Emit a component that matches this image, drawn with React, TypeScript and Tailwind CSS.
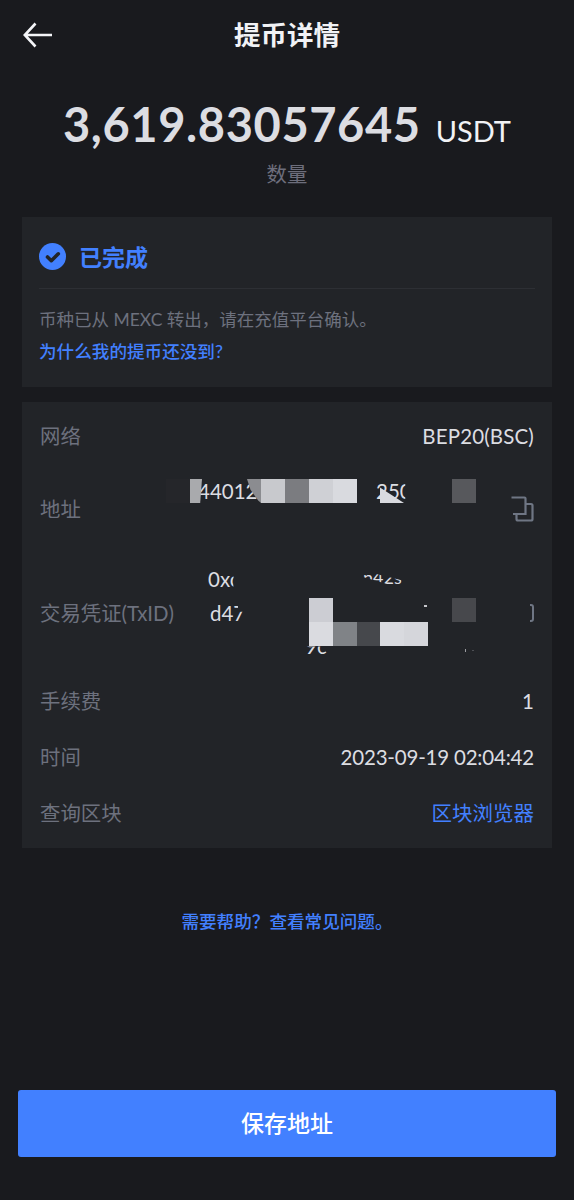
import type { ReactNode } from 'react';

// Mosaic tiles laid over the private parts of the address and the TxID
const addressTiles = [
  'left-[-24px] w-6 bg-[#25262a]',
  'left-0 w-3 bg-[#a9aaad] [clip-path:polygon(0_0,100%_0,85%_100%,0_100%)]',
  'left-[57px] w-[14px] bg-[#8b8c90] [clip-path:polygon(0_0,100%_0,100%_100%,80%_90%,25%_45%)]',
  'left-[71px] w-6 bg-[#c8c9cd]',
  'left-[95px] w-6 bg-[#7b7c80]',
  'left-[119px] w-6 bg-[#cfd0d5]',
  'left-[143px] w-6 bg-[#d9dadf]',
  'left-[262px] w-6 bg-[#57585c]',
];

const txTiles = [
  'left-[119px] top-0 bg-[#cccdd3]',
  'left-[262px] top-0 bg-[#47484c]',
  'left-[119px] top-6 bg-[#dadbe0]',
  'left-[143px] top-6 bg-[#808387]',
  'left-[167px] top-6 bg-[#46484c]',
  'left-[190px] top-6 bg-[#d9dadf]',
  'left-[214px] top-6 bg-[#d5d6db]',
];

interface RowProps {
  label: string;
  className: string;
  children: ReactNode;
}

function Row({ label, className, children }: RowProps) {
  return (
    <div className={`flex items-center justify-between ${className}`}>
      <span className="text-[20.400px] text-[#6d717e]">{label}</span>
      {children}
    </div>
  );
}

function BackIcon() {
  return (
    <svg width="30" height="26" viewBox="0 0 30 26" fill="none" stroke="#f4f5f8" strokeWidth="2.6">
      <path d="M13.500 1.500 2.800 13l10.700 11.500M3 13h27" />
    </svg>
  );
}

function DoneIcon() {
  return (
    <svg width="27" height="27" viewBox="0 0 27 27" fill="none">
      <circle cx="13.5" cy="13.5" r="13.5" fill="#4280ff" />
      <path d="m8.500 14 3.800 3.700 7-6.900" stroke="#222428" strokeWidth="3.6" strokeLinecap="round" strokeLinejoin="round" />
    </svg>
  );
}

function CopyIcon() {
  return (
    <svg width="23" height="26" viewBox="0 0 23 26" fill="none" stroke="#6f7684" strokeWidth="2.2">
      <path d="M.500 1.500h13q1 0 1 1v15.500H2M5.500 18v5q0 1.500 1.500 1.500h13q1.500 0 1.500-1.500V9.500q0-1.500-1.500-1.500h-5.500" />
    </svg>
  );
}

export default function App() {
  return (
    <div className="flex h-[1200px] w-[574px] flex-col overflow-hidden bg-[#191a1e] font-['Lato','Noto_Sans_CJK_SC',sans-serif] text-[#dcdde2]">
      <header className="grid h-[70px] grid-cols-[1fr_auto_1fr] items-center px-[22px]">
        <button aria-label="返回" className="w-fit">
          <BackIcon />
        </button>
        <h1 className="pt-[2px] text-[26.500px] font-bold text-[#f1f2f5]">提币详情</h1>
      </header>

      <section className="h-[147px] text-center">
        <div className="mt-[22px] flex h-[64px] items-baseline justify-center whitespace-nowrap">
          <span className="text-[47px] leading-[64px] font-bold tracking-[0.6px]">3,619.83057645</span>
          <span className="ml-[15px] text-[29px] text-[#f1f2f5]">USDT</span>
        </div>
        <p className="mt-[3px] text-[20.400px] leading-[30px] text-[#6d6e7c]">数量</p>
      </section>

      <section className="mx-[22px] h-[170px] bg-[#222428] px-[17px]">
        <div className="flex h-[72px] items-center gap-[13px] border-b border-[#2d2f34] pt-[8px] text-[#4280ff]">
          <DoneIcon />
          <span className="pt-px text-[23px] font-bold">已完成</span>
        </div>
        <p className="mt-[15px] text-[17.500px] leading-[32px] text-[#6d717e]">币种已从 MEXC 转出，请在充值平台确认。</p>
        <a className="block text-[17.600px] leading-[32px] font-medium text-[#4280ff]">为什么我的提币还没到?</a>
      </section>

      <section className="mx-[22px] mt-[15px] h-[446px] bg-[#222428] px-[18px] text-[20.500px]">
        <Row label="网络" className="h-[69px]">
          <span className="tracking-[0.15px]">BEP20(BSC)</span>
        </Row>

        <Row label="地址" className="h-[76px]">
          <div className="flex items-center">
            <div className="relative mr-[35px] h-6 w-[286px] -translate-y-[18px] leading-6">
              <span className="absolute left-[8px]">44012</span>
              <span className="absolute left-[186px] [clip-path:polygon(0_0,82%_0,82%_100%,0_100%)]">250</span>
              <span className="absolute left-[190px] h-6 w-6 bg-[#d9dadf] [clip-path:polygon(0_35%,100%_100%,0_100%)]" />
              {addressTiles.map((tile) => (
                <span key={tile} className={`absolute top-0 h-6 ${tile}`} />
              ))}
            </div>
            <CopyIcon />
          </div>
        </Row>

        <Row label="交易凭证(TxID)" className="h-[132px]">
          <div className="flex items-center">
            <div className="relative mr-[53px] h-12 w-[286px] translate-y-[9px]">
              <span className="absolute -top-[34px] left-[18px] [clip-path:polygon(0_0,82%_0,80%_100%,0_100%)]">0xc</span>
              <span className="absolute top-0 left-[20px] [clip-path:polygon(0_0,78%_0,80%_45%,100%_45%,90%_100%,0_100%)]">d47</span>
              <span className="absolute -top-[34px] left-[173px] text-[18px] [clip-path:polygon(0_25%,100%_60%,100%_90%,0_48%)]">n42s</span>
              <span className="absolute top-[33px] left-[115px] [clip-path:inset(50%_0_0_0)]">9c</span>
              {txTiles.map((tile) => (
                <span key={tile} className={`absolute h-6 w-6 ${tile}`} />
              ))}
              <span className="absolute top-[7px] left-[234px] h-[2px] w-[3px] bg-[#c5c6cb]" />
              <span className="absolute top-[51px] left-[275px] h-[3px] w-px bg-[#9a9ba0]" />
              <span className="absolute top-[52px] left-[282px] h-px w-[2px] bg-[#4d4f54]" />
            </div>
            <svg width="5" height="18" viewBox="0 0 5 18" fill="none" stroke="#6f7684" strokeWidth="2">
              <path d="M1 1h1q2 0 2 2v12q0 2-2 2H1" />
            </svg>
          </div>
        </Row>

        <Row label="手续费" className="h-[44px]">
          <span>1</span>
        </Row>
        <Row label="时间" className="h-[68px]">
          <span className="tracking-[-0.200px]">2023-09-19 02:04:42</span>
        </Row>
        <Row label="查询区块" className="h-[45px]">
          <a className="text-[#4280ff]">区块浏览器</a>
        </Row>
      </section>

      <a className="mt-[58px] block text-center text-[17.600px] leading-[32px] font-medium text-[#4280ff]">
        需要帮助？查看常见问题。
      </a>

      <button className="mx-[18px] mt-auto mb-[43px] h-[67px] rounded-[3px] bg-[#4280ff] text-[23px] font-medium text-white">
        保存地址
      </button>
    </div>
  );
}
